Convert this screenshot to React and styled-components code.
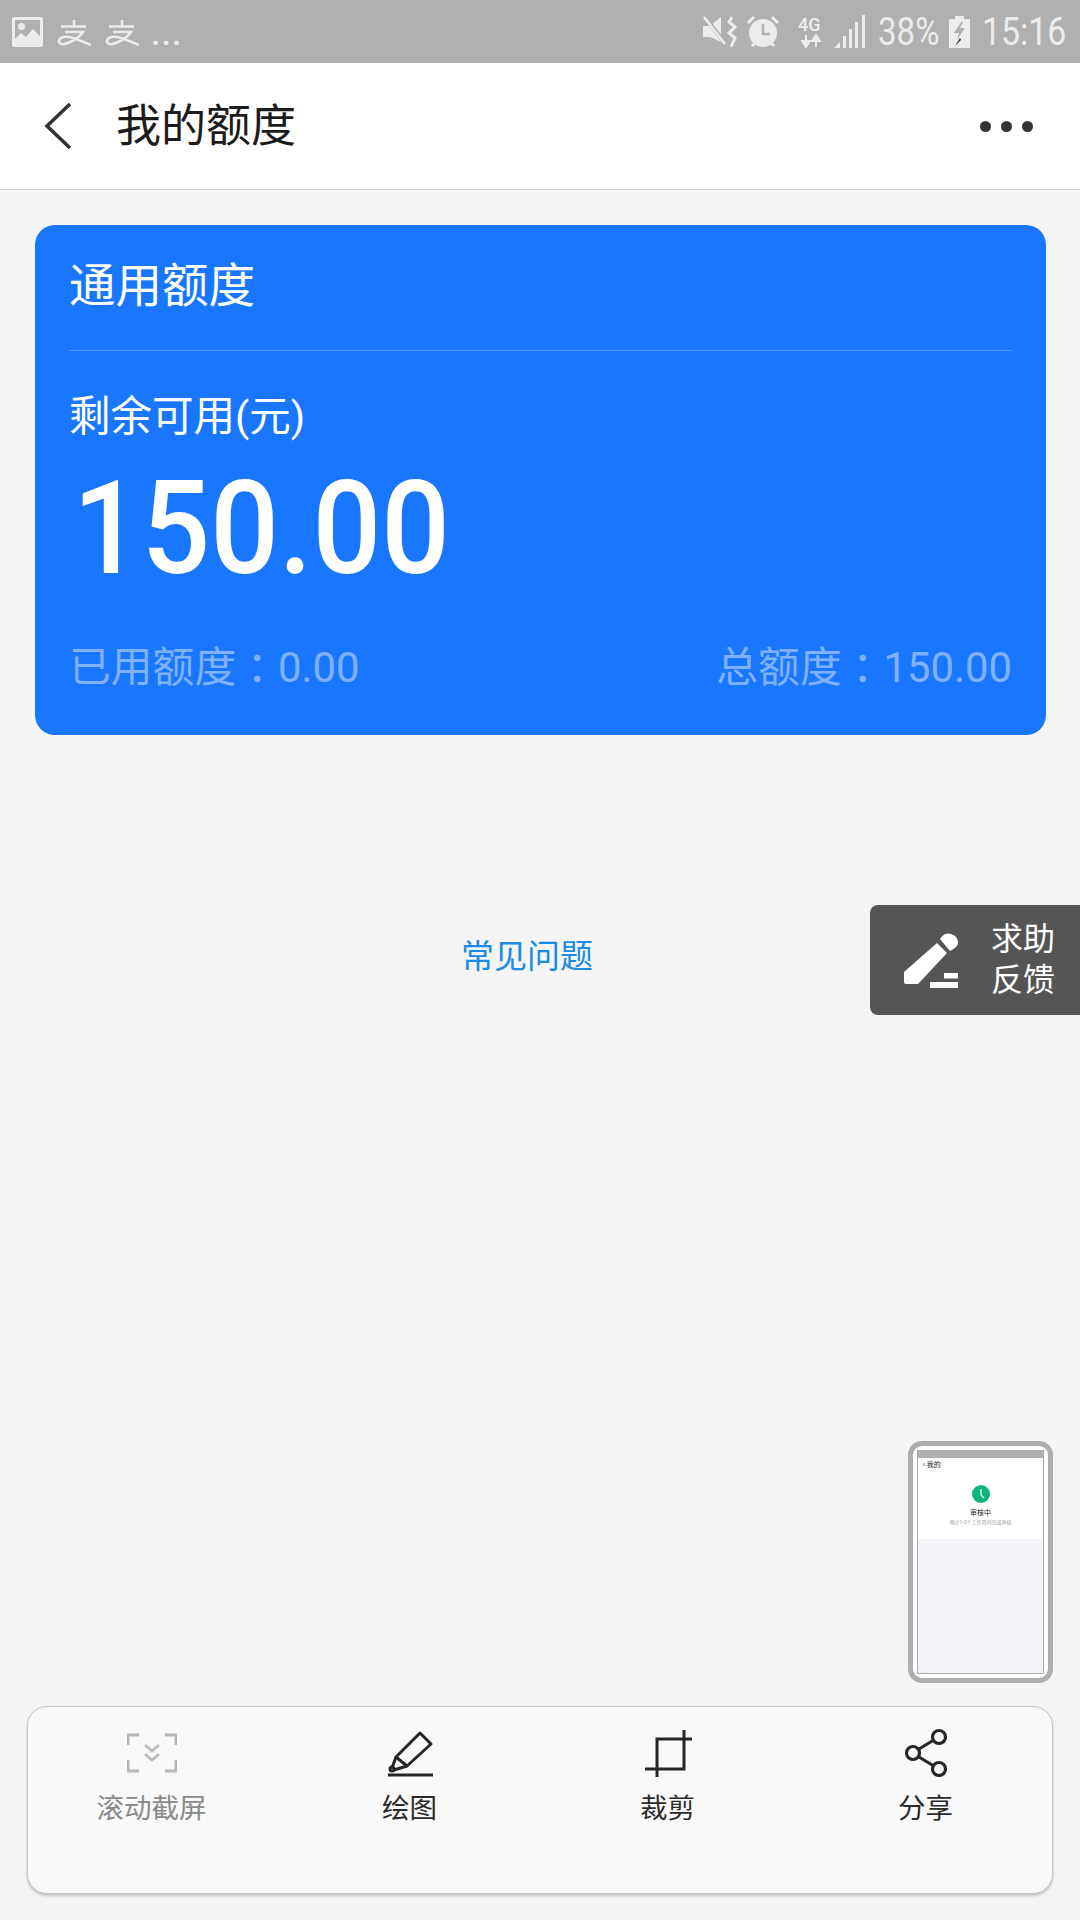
import React from "react";
import styled, { createGlobalStyle } from "styled-components";

const Global = createGlobalStyle`
  html, body { margin: 0; padding: 0; background: #f5f5f5; }
  body { font-family: Roboto, "Noto Sans CJK SC", sans-serif; }
  * { box-sizing: border-box; }
`;

const Page = styled.div`
  position: relative;
  width: 1080px;
  height: 1920px;
  overflow: hidden;
  display: flex;
  flex-direction: column;
  background: #f5f5f5;
`;

const StatusBar = styled.div`
  height: 63px;
  flex: none;
  background: #b0b0b0;
  color: #ececec;
  display: flex;
  align-items: center;
  padding: 0 17.500px 0 12px;
`;
const StatusGroup = styled.div`
  display: flex;
  align-items: center;
  gap: ${p => p.$gap || 0}px;
  margin-right: ${p => (p.$grow ? "auto" : "0")};
`;
const Ellipsis = styled.span`
  font-size: 34px;
  letter-spacing: 1px;
  line-height: 1;
  font-weight: 500;
  margin: 3px 0 0 -2px;
`;
const StatusText = styled.span`
  font-size: 38px;
  line-height: 1;
  display: inline-block;
  transform: scaleX(${p => p.$sx});
  transform-origin: left center;
  white-space: nowrap;
  width: ${p => p.$w}px;
  margin-left: ${p => p.$ml}px;
`;
const StatusIcon = styled.svg`
  flex: none;
  margin-left: ${p => p.$ml || 0}px;
`;

const Header = styled.header`
  height: 127px;
  flex: none;
  background: #fff;
  border-bottom: 1px solid #cccccc;
  display: flex;
  align-items: center;
  padding: 0 47px 0 44px;
`;
const Back = styled.svg`
  width: 27px;
  height: 46px;
  flex: none;
`;
const Title = styled.h1`
  margin: 2px 0 0 45px;
  font-size: 45px;
  line-height: 60px;
  font-weight: 400;
  color: #1c1c1c;
  flex: 1;
`;
const Dots = styled.div`
  display: flex;
  gap: 10px;
`;
const Dot = styled.i`
  width: 11px;
  height: 11px;
  border-radius: 50%;
  background: #333;
`;

const Card = styled.section`
  margin: 35px 34px 0 35px;
  height: 510px;
  border-radius: 20px;
  background: #1977ff;
  color: #fff;
  padding: 0 34px 0 34px;
  display: flex;
  flex-direction: column;
`;
const CardTitle = styled.div`
  height: 126px;
  flex: none;
  border-bottom: 1px solid #4d95ff;
  font-size: 46.500px;
  line-height: 122px;
`;
const Remain = styled.div`
  margin-top: 41px;
  font-size: 41.500px;
  line-height: 50px;
`;
const Amount = styled.div`
  margin-top: 22px;
  font-size: 130px;
  line-height: 130px;
  font-weight: 500;
  transform: scaleX(.93);
  transform-origin: left center;
  padding-left: 4px;
`;
const CardFoot = styled.div`
  margin-top: 47px;
  display: flex;
  justify-content: space-between;
  font-size: 41.800px;
  line-height: 50px;
  color: #80b1fc;
`;
const Colon = styled.span`
  font-family: "Noto Sans CJK TC", sans-serif;
  vertical-align: -2px;
`;

const Faq = styled.a`
  margin-top: 202px;
  align-self: center;
  margin-right: 26px;
  font-size: 33px;
  line-height: 40px;
  color: #1a8ce6;
`;

const Feedback = styled.div`
  position: absolute;
  left: 870px;
  top: 905px;
  width: 210px;
  height: 110px;
  background: #555;
  border-radius: 8px 0 0 8px;
  color: #fff;
  display: flex;
  align-items: center;
  padding-left: 31px;
`;
const FeedbackText = styled.div`
  margin-left: 32px;
  font-size: 32px;
  line-height: 41px;
`;

const Thumb = styled.div`
  position: absolute;
  left: 908px;
  top: 1441px;
  width: 145px;
  height: 242px;
  border: 5px solid #aeaeae;
  border-radius: 14px;
  background: #fff;
  padding: 4px;
`;
const ThumbScreen = styled.div`
  height: 100%;
  border: 1px solid #aaa;
  border-top: none;
  display: flex;
  flex-direction: column;
  background: #f3f3f8;
`;
const ThumbStatus = styled.div`
  height: 8px;
  background: #b0b0b0;
  flex: none;
`;
const ThumbBody = styled.div`
  height: 81px;
  flex: none;
  background: #fff;
  display: flex;
  flex-direction: column;
  align-items: center;
  position: relative;
  padding-top: 27px;
`;
const ThumbBack = styled.span`
  position: absolute;
  left: 5px;
  top: 3px;
  font-size: 7px;
  line-height: 9px;
  color: #222;
`;
const ThumbMain = styled.span`
  margin-top: 6px;
  font-size: 7px;
  line-height: 9px;
  color: #222;
`;
const ThumbSub = styled.span`
  margin-top: 1px;
  font-size: 5px;
  line-height: 7px;
  color: #999;
  white-space: nowrap;
`;

const Toolbar = styled.nav`
  margin: auto 27px 26px 27px;
  height: 188px;
  flex: none;
  border-radius: 20px;
  background: #f9f9f9;
  border: 1px solid #c4c4c4;
  box-shadow: 0 2px 3px rgba(0,0,0,.2);
  display: grid;
  grid-template-columns: repeat(4, 258px);
  justify-content: center;
  padding: 20px 3px 0 0;
`;
const Tool = styled.div`
  display: flex;
  flex-direction: column;
  align-items: center;
  color: ${p => (p.$muted ? "#8a8a8a" : "#2a2a2a")};
  font-size: 27.500px;
  line-height: 34px;
`;
const ToolIcon = styled.svg`
  width: 50px;
  height: 50px;
  margin-bottom: 15px;
  flex: none;
`;

const Alipay = () => (
  <svg width="34" height="28" viewBox="0 0 34 28" fill="none" stroke="#ececec" strokeWidth="2.500">
    <path d="M4 8.500H29M17 2V8.500M8 14H26C22 20 14 25 7 26C2 27 0 23 4 20C9 16 22 22 34 27" />
  </svg>
);

export default function App() {
  return (
    <Page>
      <Global />
      <StatusBar>
        <StatusGroup $gap={14} $grow>
          <svg width="31" height="30" viewBox="0 0 31 30">
            <rect width="31" height="30" rx="2" fill="#ececec" />
            <rect x="3" y="3" width="25" height="24" fill="#b0b0b0" />
            <circle cx="9.500" cy="9.500" r="3.500" fill="#ececec" />
            <path d="M3 22L9 16L14 20L21 12L28 19V27H3Z" fill="#ececec" />
          </svg>
          <Alipay />
          <Alipay />
          <Ellipsis>...</Ellipsis>
        </StatusGroup>
        <StatusGroup>
          <StatusIcon width="36" height="34" viewBox="0 0 36 34" fill="#ececec">
            <path d="M1 11H8L19 2V27L8 22H1Z" />
            <path d="M3 2L25 31" stroke="#b0b0b0" strokeWidth="4" />
            <path d="M2 2L23 29" stroke="#ececec" strokeWidth="2.500" />
            <path d="M30 2L27 7L33 12L27 18L33 23L29 32" fill="none" stroke="#ececec" strokeWidth="3" />
          </StatusIcon>
          <StatusIcon $ml={8} width="34" height="34" viewBox="0 0 34 34" fill="none">
            <circle cx="17" cy="18" r="14" fill="#ececec" />
            <path d="M17 9V19H24" stroke="#b0b0b0" strokeWidth="2.500" />
            <path d="M2 8L8 2M32 8L26 2M6 31L9 28M28 31L25 28" stroke="#ececec" strokeWidth="3" />
          </StatusIcon>
          <StatusIcon $ml={18} width="26" height="34" viewBox="0 0 26 34" fill="#ececec">
            <text x="0" y="16" fontFamily="Roboto, sans-serif" fontSize="18" fontWeight="500">4G</text>
            <path d="M8 20V28M4 26L8 32L12 26Z" stroke="#ececec" strokeWidth="2" />
            <path d="M18 32V24M14 26L18 20L22 26Z" stroke="#ececec" strokeWidth="2" />
          </StatusIcon>
          <StatusIcon $ml={10.5} width="32" height="33" viewBox="0 0 32 33" fill="#ececec">
            <path d="M0 33L6 27V33Z" />
            <rect x="9" y="21" width="3" height="12" />
            <rect x="15" y="14" width="3" height="19" />
            <rect x="21" y="7" width="3" height="26" />
            <rect x="28" y="0" width="3" height="33" />
          </StatusIcon>
          <StatusText $w={60} $ml={12} $sx={0.87}>38%</StatusText>
          <StatusIcon $ml={11} width="21" height="32" viewBox="0 0 21 32">
            <path d="M6 0H15V3H21V32H0V3H6Z" fill="#ececec" />
            <path d="M12 6L5 17H10L8 24L16 12H11L14 6Z" fill="#b0b0b0" />
            <path d="M11 22L6 30L12 24Z" fill="#333" />
          </StatusIcon>
          <StatusText $w={81} $ml={11.5} $sx={0.89}>15:16</StatusText>
        </StatusGroup>
      </StatusBar>

      <Header>
        <Back viewBox="0 0 27 46" fill="none" stroke="#333" strokeWidth="3.500">
          <path d="M26 1L3 23L26 45" />
        </Back>
        <Title>我的额度</Title>
        <Dots><Dot /><Dot /><Dot /></Dots>
      </Header>

      <Card>
        <CardTitle>通用额度</CardTitle>
        <Remain>剩余可用(元)</Remain>
        <Amount>150.00</Amount>
        <CardFoot>
          <span>已用额度<Colon>：</Colon>0.00</span>
          <span>总额度<Colon>：</Colon>150.00</span>
        </CardFoot>
      </Card>

      <Faq>常见问题</Faq>

      <Feedback>
        <svg width="58" height="58" viewBox="0 0 58 58" fill="#fff">
          <path d="M36 12L46 22L17 53H5Q3 53 3 51V41Z" />
          <path d="M39 8Q44 1 50 3Q57 5 57 12Q57 16 49 20Z" />
          <rect x="43" y="42" width="14" height="5.500" />
          <rect x="29" y="51" width="28" height="6" />
        </svg>
        <FeedbackText>求助<br />反馈</FeedbackText>
      </Feedback>

      <Thumb>
        <ThumbScreen>
          <ThumbStatus />
          <ThumbBody>
            <ThumbBack>‹ 我的</ThumbBack>
            <svg width="18" height="18" viewBox="0 0 18 18">
              <circle cx="9" cy="9" r="9" fill="#0fb47f" />
              <path d="M9 4V10L12 13" stroke="#fff" strokeWidth="1.200" fill="none" />
            </svg>
            <ThumbMain>审核中</ThumbMain>
            <ThumbSub>预计1-3个工作日内完成审核</ThumbSub>
          </ThumbBody>
        </ThumbScreen>
      </Thumb>

      <Toolbar>
        <Tool $muted>
          <ToolIcon viewBox="0 0 50 50" fill="none" stroke="#b8b8b8" strokeWidth="3">
            <path d="M1 18V8H12M38 8H49V18M1 33V44H12M38 44H49V33" />
            <path d="M18 18L25 24L32 18M18 27L25 33L32 27" strokeWidth="2.500" />
          </ToolIcon>
          滚动截屏
        </Tool>
        <Tool>
          <ToolIcon viewBox="0 0 50 50" fill="none" stroke="#262626" strokeWidth="3">
            <path d="M3 48H48" />
            <path d="M35 6L46 17L22 39L11 30Z" strokeLinejoin="round" />
            <path d="M11 30L7 41M22 39L9 43" />
            <circle cx="7" cy="42" r="2" />
          </ToolIcon>
          绘图
        </Tool>
        <Tool>
          <ToolIcon viewBox="0 0 50 50" fill="none" stroke="#262626" strokeWidth="3">
            <path d="M14 50V12H49" />
            <path d="M2 42H41V3" />
          </ToolIcon>
          裁剪
        </Tool>
        <Tool>
          <ToolIcon viewBox="0 0 50 50" fill="none" stroke="#262626" strokeWidth="3.200">
            <circle cx="38" cy="10" r="6.500" />
            <circle cx="12" cy="26" r="6.500" />
            <circle cx="38" cy="42" r="6.500" />
            <path d="M18 22L32 13.500M18 30L32 38.500" />
          </ToolIcon>
          分享
        </Tool>
      </Toolbar>
    </Page>
  );
}
